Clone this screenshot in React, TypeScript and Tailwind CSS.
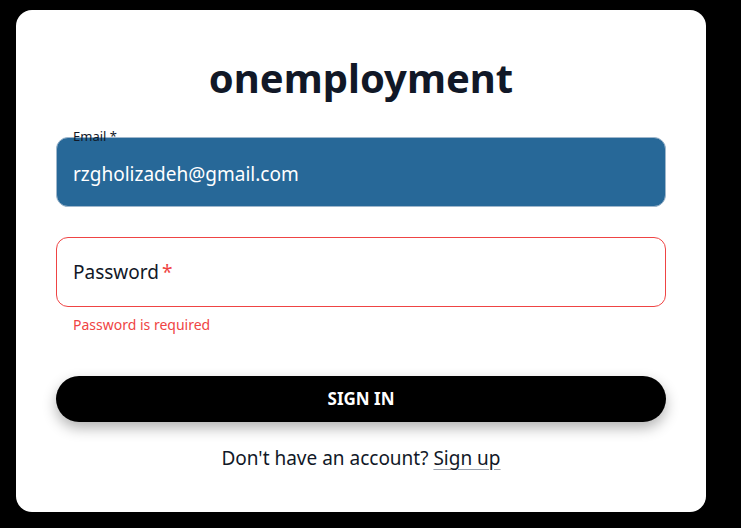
import React from "react";

export default function App() {
  const [email, setEmail] = React.useState("rzgholizadeh@gmail.com");

  return (
    <div className="min-h-[528px] w-full bg-black pl-4 pt-[10px] font-['Noto_Sans',sans-serif]">
      <div className="flex h-[502px] w-[690px] flex-col rounded-2xl bg-white px-10 pt-[40px]">
        <h1 className="text-center text-[40px] font-bold leading-[56px] text-[#111827]">
          onemployment
        </h1>

        <div className="relative mt-[31px]">
          <label className="absolute -top-[9px] left-[17px] text-[13px] leading-4 text-[#111827]">
            Email *
          </label>
          <input
            value={email}
            onChange={(e) => setEmail(e.target.value)}
            className="h-[70px] w-full rounded-xl border border-[#9fb7cc] bg-[#276898] px-4 pt-1 text-[19px] text-white outline-none"
          />
        </div>

        <div className="mt-[30px] flex h-[70px] items-center rounded-xl border border-[#ef4444] px-4 text-[19px] text-[#111827]">
          Password<span className="ml-[3px] text-[#ef4444]">*</span>
        </div>
        <p className="mt-[8px] px-[17px] text-[14px] leading-5 text-[#ef4444]">Password is required</p>

        <button className="mt-[41px] h-[46px] w-full rounded-full bg-black text-[17px] font-bold text-white shadow-[0_6px_14px_rgba(0,0,0,0.3)]">
          SIGN IN
        </button>

        <p className="mt-[22px] text-center text-[19px] text-[#111827]">
          Don't have an account?{" "}
          <a href="#" className="underline decoration-[#9ca3af] underline-offset-4">
            Sign up
          </a>
        </p>
      </div>
    </div>
  );
}
